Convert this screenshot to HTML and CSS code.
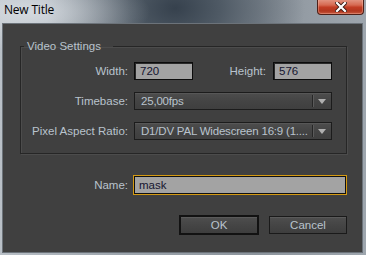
FILE: index.html
```html
<!DOCTYPE html>
<html lang="en">

<head>
    <meta charset="UTF-8">
    <meta name="viewport" content="width=device-width, initial-scale=1.0">
    <title>New Title</title>
    <link rel="stylesheet" href="styles.css">
</head>

<body>
    <div class="window">
        <!-- Title Bar -->
        <div class="titlebar">
            <span class="title">New Title</span>
            <button class="close" type="button" aria-label="Close">
                <svg width="12" height="10" viewBox="0 0 12 10">
                    <path d="M2 1 L10 9 M10 1 L2 9" stroke="#3a1a14" stroke-width="4" stroke-linecap="square" />
                    <path d="M2 1 L10 9 M10 1 L2 9" stroke="#ffffff" stroke-width="2.2" stroke-linecap="square" />
                </svg>
            </button>
        </div>

        <!-- Dialog Body -->
        <div class="dialog">
            <fieldset class="group">
                <legend>Video Settings</legend>
                <div class="grid">
                    <label class="lbl" for="width">Width:</label>
                    <input class="field" id="width" type="text" value="720">
                    <label class="lbl lbl-inline" for="height">Height:</label>
                    <input class="field" id="height" type="text" value="576">

                    <span class="lbl">Timebase:</span>
                    <div class="select">
                        <span class="select-text">25,00fps</span>
                        <span class="select-arrow"></span>
                    </div>

                    <span class="lbl">Pixel Aspect Ratio:</span>
                    <div class="select">
                        <span class="select-text">D1/DV PAL Widescreen 16:9 (1....</span>
                        <span class="select-arrow"></span>
                    </div>
                </div>
            </fieldset>

            <div class="name-row">
                <label class="lbl" for="name">Name:</label>
                <input class="field field-focus" id="name" type="text" value="mask">
            </div>

            <div class="actions">
                <button class="btn btn-default" type="button">OK</button>
                <button class="btn" type="button">Cancel</button>
            </div>
        </div>
    </div>
</body>

</html>
```

FILE: styles.css
```css
body {
    margin: 0;
    padding: 0;
    font-family: 'Liberation Sans', Arial, sans-serif;
    background-color: #9aa2aa;
}

.window {
    width: 366px;
    height: 255px;
    display: flex;
    flex-direction: column;
    background:
        radial-gradient(ellipse 120px 40px at 30px 12px, rgba(220, 225, 230, 0.8), rgba(220, 225, 230, 0) 100%),
        radial-gradient(ellipse 130px 90px at 175px 8px, #36414d 0%, #4f5a65 35%, rgba(140, 148, 156, 0) 100%),
        linear-gradient(to right, #b9c0c7 0%, #9ba3ab 35%, #8c949c 70%, #9ea6ae 100%);
}

.titlebar {
    height: 23px;
    display: flex;
    justify-content: space-between;
    align-items: flex-start;
    padding: 0 2px 0 4px;
}

.title {
    font-family: 'Open Sans', 'Liberation Sans', sans-serif;
    font-size: 12px;
    line-height: 12px;
    margin-top: 4px;
    color: #000000;
    letter-spacing: -0.2px;
}

.close {
    width: 47px;
    height: 16px;
    margin-top: -1px;
    padding: 0;
    border: 1px solid #4e2018;
    border-top: none;
    border-radius: 0 0 4px 4px;
    background: linear-gradient(to bottom, #e49a88 0%, #d66a52 40%, #c23d24 55%, #b1371f 80%, #c85a40 100%);
    box-shadow: inset 0 0 0 1px rgba(255, 200, 180, 0.35);
    display: flex;
    align-items: center;
    justify-content: center;
}

.dialog {
    flex: 1;
    margin: 0 3px 2px 2px;
    border: 1px solid #6c737a;
    background-color: #404040;
    padding: 15px 15px 0 17px;
    font-size: 11.5px;
    color: #b9c3cd;
}

.group {
    margin: 0;
    padding: 0 14px 13px 0;
    border: 1px solid #262626;
    box-shadow: inset 1px 1px 0 #4c4c4c, 1px 1px 0 #4c4c4c;
    min-width: 0;
}

.group legend {
    margin-left: 3px;
    padding: 0 12px 0 3px;
    line-height: 14px;
    color: #b9c3cd;
}

.grid {
    display: grid;
    grid-template-columns: 107px 59px 1fr 59px;
    column-gap: 6px;
    row-gap: 12px;
    align-items: center;
    margin-top: 9px;
}

.lbl {
    text-align: right;
    line-height: 14px;
    white-space: nowrap;
}

.lbl-inline {
    padding-right: 1px;
}

.field {
    box-sizing: border-box;
    height: 18px;
    width: 100%;
    margin: 0;
    padding: 0 5px;
    border: 1px solid #0c0c0c;
    box-shadow: inset 1px 1px 0 #2a2a2a;
    background-color: #a3a3a3;
    font-family: 'Liberation Sans', Arial, sans-serif;
    font-size: 11.5px;
    color: #151530;
    outline: none;
}

.select {
    grid-column: 2 / 5;
    height: 18px;
    box-sizing: border-box;
    display: flex;
    align-items: center;
    border: 1px solid #1c1c1c;
    background: linear-gradient(to bottom, #4d4d4d 0%, #444444 50%, #3f3f3f 100%);
    box-shadow: inset 0 1px 0 #575757;
}

.select-text {
    flex: 1;
    padding-left: 6px;
    white-space: nowrap;
    overflow: hidden;
    line-height: 14px;
    letter-spacing: -0.2px;
}

.select-arrow {
    width: 18px;
    height: 12px;
    border-left: 1px solid #262626;
    box-shadow: inset 1px 0 0 #5a5a5a;
    position: relative;
}

.select-arrow::after {
    content: '';
    position: absolute;
    left: 5px;
    top: 4px;
    border-left: 4px solid transparent;
    border-right: 4px solid transparent;
    border-top: 5px solid #b0b0b0;
}

.name-row {
    display: grid;
    grid-template-columns: 108px 1fr;
    column-gap: 5px;
    align-items: center;
    margin-top: 21px;
}

.field-focus {
    height: 20px;
    border: 1px solid #d59a12;
    box-shadow: inset 0 0 0 1px #101010;
}

.actions {
    display: flex;
    justify-content: flex-end;
    align-items: center;
    gap: 10px;
    margin-top: 20px;
}

.btn {
    box-sizing: border-box;
    width: 78px;
    height: 18px;
    margin: 1px 0;
    padding: 0;
    border: 1px solid #1a1a1a;
    background: linear-gradient(to bottom, #4e4e4e 0%, #454545 50%, #3e3e3e 100%);
    box-shadow: inset 0 1px 0 #5a5a5a;
    font-family: 'Liberation Sans', Arial, sans-serif;
    font-size: 11.5px;
    color: #b9c3cd;
}

.btn-default {
    width: 80px;
    height: 20px;
    margin: 0;
    border: 2px solid #121212;
}
```
